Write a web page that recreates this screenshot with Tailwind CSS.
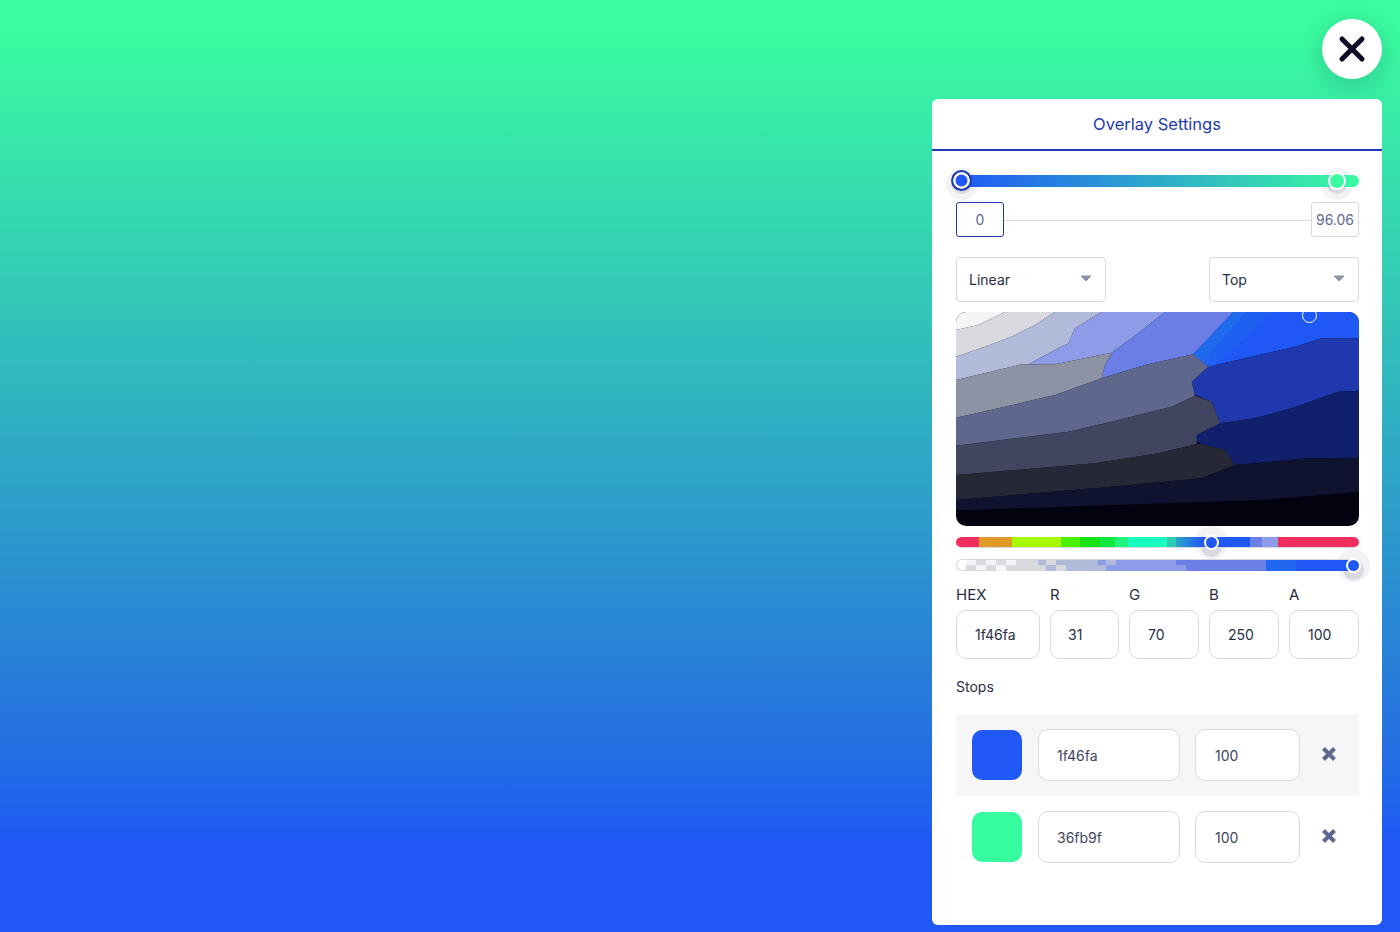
<!DOCTYPE html>
<html>
<head>
<meta charset="utf-8">
<script src="https://cdn.jsdelivr.net/npm/@tailwindcss/browser@4"></script>
</head>
<body class="m-0">
<div class="relative h-[932px] w-[1400px] overflow-hidden font-['Inter',sans-serif] bg-[linear-gradient(to_bottom,#3bfca0_0px,#3bfca0_32px,#2880d8_660px,#2470e2_745px,#2168e8_780px,#2060ee_815px,#2058f5_840px,#2058f5_932px)]">
  <div class="flex flex-col items-end pt-[19px] pr-[18px]">
    <button class="flex h-[60px] w-[60px] items-center justify-center rounded-full bg-white shadow-[0_6px_20px_6px_rgba(0,60,60,0.14)]">
      <svg width="30" height="30" viewBox="0 0 30 30"><path d="M5 5L25 25M25 5L5 25" stroke="#0a0a23" stroke-width="5" stroke-linecap="round"/></svg>
    </button>
    <div class="relative mt-[20px] flex h-[826px] w-[450px] flex-col rounded-[6px] bg-white">
      <div class="flex h-[52px] items-center justify-center border-b-2 border-[#1e3aaf] text-[16.5px] text-[#1e3aaf]">Overlay Settings</div>
      <div class="flex flex-col pl-[24px] pr-[23px]">
        <div class="relative mt-[24px] h-[12px]">
          <div class="absolute left-[-3px] top-[-3px] h-[18px] w-[18px] rounded-full shadow-[0_3px_0_1px_#d8dae0,0_3px_0_7px_#f2f3f5]"></div>
          <div class="absolute left-[372px] top-[-3px] h-[18px] w-[18px] rounded-full shadow-[0_3px_0_1px_#d8dae0,0_3px_0_7px_#f2f3f5]"></div>
          <div class="relative h-[12px] rounded-full bg-[linear-gradient(to_right,#2058f5,#3bfca0)]"></div>
          <div class="absolute left-[-5px] top-[-5px] h-[21px] w-[21px] rounded-full border-[2px] border-[#1e3aaf] bg-[#2058f5] shadow-[inset_0_0_0_2.5px_white]"></div>
          <div class="absolute left-[372px] top-[-3px] h-[18px] w-[18px] rounded-full border-[2.5px] border-white bg-[#3bfca0]"></div>
        </div>
        <div class="relative z-10 mt-[15px] flex h-[35px] items-center justify-between">
          <div class="flex h-[35px] w-[48px] items-center justify-center rounded-[3px] border border-[#1e3aaf] bg-white text-[14px] text-[#5f688c]">0</div>
          <div class="mt-[2px] h-px flex-1 bg-[#d8dae0]"></div>
          <div class="flex h-[35px] w-[48px] items-center justify-center rounded-[3px] border border-[#d8dae0] bg-white text-[14px] text-[#5f688c]">96.06</div>
        </div>
        <div class="mt-[20px] flex justify-between">
          <div class="flex h-[45px] w-[150px] items-center justify-between rounded-[4px] border border-[#d8dae0] pl-[12px] pr-[13px] text-[14px] text-[#2a2d45]">
            <span>Linear</span>
            <svg width="12" height="7" viewBox="0 0 12 7" class="mb-[3px]"><path d="M1 1H11L6 6Z" fill="#8e92a5" stroke="#8e92a5" stroke-linejoin="round"/></svg>
          </div>
          <div class="flex h-[45px] w-[150px] items-center justify-between rounded-[4px] border border-[#d8dae0] pl-[12px] pr-[13px] text-[14px] text-[#2a2d45]">
            <span>Top</span>
            <svg width="12" height="7" viewBox="0 0 12 7" class="mb-[3px]"><path d="M1 1H11L6 6Z" fill="#8e92a5" stroke="#8e92a5" stroke-linejoin="round"/></svg>
          </div>
        </div>
        <div class="relative z-10 mt-[10px] h-[214px] w-[403px] overflow-hidden rounded-[10px] bg-[#03030f]">
          <svg class="block" width="403" height="214" viewBox="33 21 1209 642" preserveAspectRatio="none">
            <polygon fill="#f4f5f7" points="33,21 180,21 100,60 33,75"/>
            <polygon fill="#d8dae0" points="33,75 100,60 180,21 330,21 270,60 200,95 120,125 33,155"/>
            <polygon fill="#b1bad9" points="33,155 120,125 200,95 270,60 330,21 470,21 390,70 370,115 340,130 250,178 230,178 33,225"/>
            <polygon fill="#8e9ce8" points="470,21 660,21 560,100 500,143 330,178 250,178 340,130 370,115 390,70"/>
            <polygon fill="#6b7ee6" points="660,21 865,21 800,90 745,148 600,180 470,220 480,180 500,143 560,100"/>
            <polygon fill="#2058f5" points="865,21 1242,21 1242,100 1130,100 1050,125 790,185 745,148"/>
            <polygon fill="#2060f1" points="865,21 975,21 900,100 810,180 790,185 745,148 800,90"/>
            <polygon fill="#206bec" points="865,21 905,21 840,90 775,172 745,148 800,90"/>
            <polygon fill="#2038ad" points="790,185 1050,125 1130,100 1242,100 1242,257 1180,260 1040,310 930,340 825,355 800,290 750,270 740,230"/>
            <polygon fill="#10206c" points="825,355 930,340 1040,310 1180,260 1242,257 1242,458 1090,460 870,480 840,435 770,417 755,410 755,390"/>
            <polygon fill="#8e92a5" points="33,225 230,178 330,178 500,143 480,180 470,220 330,270 180,305 33,338"/>
            <polygon fill="#5f688c" points="33,338 180,305 330,270 470,220 600,180 745,148 790,185 740,230 750,272 680,305 500,350 370,380 33,422"/>
            <polygon fill="#42455f" points="33,422 370,380 500,350 680,305 750,272 800,290 825,355 755,390 755,417 640,445 450,475 33,510"/>
            <polygon fill="#262838" points="33,510 450,475 640,445 755,417 770,417 840,435 870,480 770,520 500,545 33,585"/>
            <polygon fill="#0f132f" points="33,585 500,545 770,520 870,480 1090,460 1242,458 1242,560 950,585 500,600 80,615 33,615"/>
          </svg>
          <div class="absolute left-[346px] top-[-4px] h-[15px] w-[15px] rounded-full border border-white"></div>
        </div>
        <div class="relative mt-[11px] h-[10.5px] w-[403px]">
          <div class="absolute left-[248px] top-[-2px] h-[15px] w-[15px] rounded-full shadow-[0_4px_0_3px_#d8dae0,0_0_0_9px_#f2f3f5]"></div>
          <div class="relative flex h-full overflow-hidden rounded-full border-b border-[#d8dae0]">
            <div class="w-[23px] bg-[#f22e5e]"></div>
            <div class="w-[33px] bg-[#df9a27]"></div>
            <div class="w-[49px] bg-[#a8f900]"></div>
            <div class="w-[19px] bg-[#4af000]"></div>
            <div class="w-[20px] bg-[#19e313]"></div>
            <div class="w-[15px] bg-[#10e840]"></div>
            <div class="w-[13px] bg-[#1ef37c]"></div>
            <div class="w-[39px] bg-[#19ffc0]"></div>
            <div class="w-[9px] bg-[#2dcbb0]"></div>
            <div class="w-[27px] bg-[linear-gradient(to_right,#2aa5c8,#2058f5)]"></div>
            <div class="w-[47px] bg-[#2058f5]"></div>
            <div class="w-[12px] bg-[#6b7ee6]"></div>
            <div class="w-[16px] bg-[#8e9ce8]"></div>
            <div class="flex-1 bg-[#f22e5e]"></div>
          </div>
          <div class="absolute left-[248px] top-[-2px] h-[15px] w-[15px] rounded-full border-[2px] border-white bg-[#2058f5]"></div>
        </div>
        <div class="relative mt-[11px] h-[12.5px] w-[403px]">
          <div class="absolute left-[390px] top-[-1px] h-[15px] w-[15px] rounded-full shadow-[0_4px_0_3px_#d8dae0,0_0_0_9px_#f2f3f5]"></div>
          <svg class="relative block rounded-full" width="403" height="12.5" viewBox="33 100 1209 37" preserveAspectRatio="none">
            <rect x="33" y="100" width="330" height="37" fill="#d8dae0"/>
            <rect x="33" y="100" width="30" height="18" fill="#ffffff"/>
            <rect x="63" y="100" width="30" height="18" fill="#f4f5f7"/>
            <rect x="123" y="100" width="30" height="18" fill="#f4f5f7"/>
            <rect x="183" y="100" width="30" height="18" fill="#f4f5f7"/>
            <rect x="33" y="118" width="30" height="19" fill="#ffffff"/>
            <rect x="93" y="118" width="30" height="19" fill="#f4f5f7"/>
            <rect x="153" y="118" width="30" height="19" fill="#f4f5f7"/>
            <rect x="280" y="100" width="23" height="18" fill="#b1bad9"/>
            <rect x="333" y="100" width="30" height="18" fill="#b1bad9"/>
            <rect x="303" y="118" width="30" height="19" fill="#b1bad9"/>
            <rect x="363" y="100" width="150" height="37" fill="#b1bad9"/>
            <rect x="458" y="100" width="25" height="18" fill="#8e9ce8"/>
            <rect x="483" y="118" width="30" height="19" fill="#8e9ce8"/>
            <rect x="513" y="100" width="210" height="37" fill="#8e9ce8"/>
            <rect x="693" y="100" width="30" height="18" fill="#6b7ee6"/>
            <rect x="723" y="100" width="240" height="37" fill="#6b7ee6"/>
            <rect x="963" y="100" width="279" height="37" fill="#2058f5"/>
            <rect x="963" y="100" width="90" height="37" fill="#2066ee"/>
          </svg>
          <div class="absolute left-0 top-0 h-[12.5px] w-[30px] rounded-l-full border-y border-l border-[#d8dae0]"></div>
          <div class="absolute left-[6px] right-[6px] top-0 h-px bg-[#d8dae0]"></div>
          <div class="absolute left-[390px] top-[-1px] h-[15px] w-[15px] rounded-full border-[2px] border-white bg-[#2058f5]"></div>
        </div>
        <div class="relative mt-[14px] flex gap-[10px] text-[14px] text-[#2a2d45]">
          <div class="flex w-[84px] flex-col">
            <span class="h-[20px] text-[15px] leading-[20px]">HEX</span>
            <div class="mt-[5px] flex h-[49px] items-center rounded-[10px] border border-[#d8dae0] pl-[18px]">1f46fa</div>
          </div>
          <div class="flex w-[69px] flex-col">
            <span class="h-[20px] text-[15px] leading-[20px]">R</span>
            <div class="mt-[5px] flex h-[49px] items-center rounded-[10px] border border-[#d8dae0] pl-[17px]">31</div>
          </div>
          <div class="flex w-[70px] flex-col">
            <span class="h-[20px] text-[15px] leading-[20px]">G</span>
            <div class="mt-[5px] flex h-[49px] items-center rounded-[10px] border border-[#d8dae0] pl-[18px]">70</div>
          </div>
          <div class="flex w-[70px] flex-col">
            <span class="h-[20px] text-[15px] leading-[20px]">B</span>
            <div class="mt-[5px] flex h-[49px] items-center rounded-[10px] border border-[#d8dae0] pl-[18px]">250</div>
          </div>
          <div class="flex w-[70px] flex-col">
            <span class="h-[20px] text-[15px] leading-[20px]">A</span>
            <div class="mt-[5px] flex h-[49px] items-center rounded-[10px] border border-[#d8dae0] pl-[18px]">100</div>
          </div>
        </div>
        <div class="mt-[18px] h-[20px] text-[14px] leading-[20px] text-[#2a2d45]">Stops</div>
        <div class="mt-[17px] flex h-[82px] w-[403px] items-center bg-[#f6f6f8] pl-[16px] text-[14px] text-[#42455f]">
          <div class="h-[50px] w-[50px] rounded-[10px] bg-[#2058f5]"></div>
          <div class="ml-[16px] flex h-[52px] w-[142px] items-center rounded-[10px] border border-[#d8dae0] bg-white pl-[18px]">1f46fa</div>
          <div class="ml-[15px] flex h-[52px] w-[105px] items-center rounded-[10px] border border-[#d8dae0] bg-white pl-[19px]">100</div>
          <svg class="mb-[2px] ml-[21px]" width="16" height="16" viewBox="0 0 16 16"><path d="M2.5 2.5L13.5 13.5M13.5 2.5L2.5 13.5" stroke="#5f688c" stroke-width="4"/></svg>
        </div>
        <div class="flex h-[82px] w-[403px] items-center pl-[16px] text-[14px] text-[#42455f]">
          <div class="h-[50px] w-[50px] rounded-[10px] bg-[#36fb9f]"></div>
          <div class="ml-[16px] flex h-[52px] w-[142px] items-center rounded-[10px] border border-[#d8dae0] bg-white pl-[18px]">36fb9f</div>
          <div class="ml-[15px] flex h-[52px] w-[105px] items-center rounded-[10px] border border-[#d8dae0] bg-white pl-[19px]">100</div>
          <svg class="mb-[2px] ml-[21px]" width="16" height="16" viewBox="0 0 16 16"><path d="M2.5 2.5L13.5 13.5M13.5 2.5L2.5 13.5" stroke="#5f688c" stroke-width="4"/></svg>
        </div>
      </div>
    </div>
  </div>
</div>
</body>
</html>
